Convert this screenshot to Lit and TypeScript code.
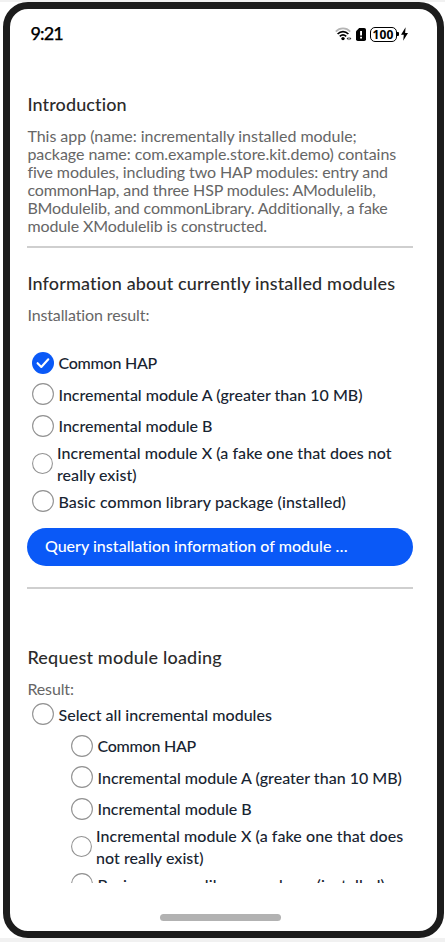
import { LitElement, html, css, svg } from "lit";
import { customElement, property } from "lit/decorators.js";
import { classMap } from "lit/directives/class-map.js";

interface Line {
  text: string;
  tracking: number;
}

interface Option {
  lines: Line[];
  checked?: boolean;
}

const line = (text: string, tracking = 0): Line => ({ text, tracking });

const intro: Line[] = [
  line("This app (name: incrementally installed module;", -0.03),
  line("package name: com.example.store.kit.demo) contains", -0.045),
  line("five modules, including two HAP modules: entry and", -0.11),
  line("commonHap, and three HSP modules: AModulelib,", -0.13),
  line("BModulelib, and commonLibrary. Additionally, a fake", -0.135),
  line("module XModulelib is constructed.", -0.12),
];

const installed: Option[] = [
  { lines: [line("Common HAP", -0.25)], checked: true },
  { lines: [line("Incremental module A (greater than 10 MB)", 0)] },
  { lines: [line("Incremental module B", -0.02)] },
  {
    lines: [
      line("Incremental module X (a fake one that does not", 0.045),
      line("really exist)", 0.05),
    ],
  },
  { lines: [line("Basic common library package (installed)", 0.11)] },
];

const loadable: Option[] = [
  { lines: [line("Common HAP", -0.25)] },
  { lines: [line("Incremental module A (greater than 10 MB)", 0.01)] },
  { lines: [line("Incremental module B", 0)] },
  {
    lines: [
      line("Incremental module X (a fake one that does", 0.06),
      line("not really exist)", 0.05),
    ],
  },
  { lines: [line("Basic common library package (installed)", 0.11)] },
];

const renderLine = (l: Line) =>
  html`<div style="letter-spacing:${l.tracking}px">${l.text}</div>`;

@customElement("check-row")
export class CheckRow extends LitElement {
  @property({ attribute: false }) option!: Option;

  static styles = css`
    :host {
      display: block;
    }
    .row {
      display: flex;
      align-items: center;
      height: 31.5px;
      gap: 4.5px;
      color: #182431;
      font-weight: 500;
      line-height: 22px;
      white-space: nowrap;
    }
    .tall {
      height: 44px;
      gap: 4px;
    }
    svg {
      flex: none;
      width: 22px;
      height: 22px;
    }
    .tall svg {
      width: 21px;
      height: 21px;
    }
    .text {
      padding-top: 1.2px;
    }
  `;

  render() {
    const { lines, checked } = this.option;
    return html`<div class=${classMap({ row: true, tall: lines.length > 1 })}>
      <svg viewBox="0 0 22 22" fill="none">
        ${checked
          ? svg`<circle cx="11" cy="11" r="11" fill="#0a59f7"/>
              <path d="M5.6 11.2l3.7 3.8 7-7.7" stroke="#fff" stroke-width="2.1" stroke-linecap="round" stroke-linejoin="round"/>`
          : svg`<circle cx="11" cy="11" r="10.4" stroke="#929292" stroke-width="1.1"/>`}
      </svg>
      <div class="text">${lines.map(renderLine)}</div>
    </div>`;
  }
}

@customElement("status-bar")
export class StatusBar extends LitElement {
  static styles = css`
    :host {
      display: flex;
      justify-content: space-between;
      align-items: center;
      height: 50px;
      padding: 0 29px 0 20.5px;
      color: #000;
    }
    .time {
      padding-bottom: 2px;
      font-size: 18px;
      font-weight: 500;
      line-height: 22px;
      letter-spacing: -0.9px;
      -webkit-text-stroke: 0.25px #000;
    }
    .icons {
      display: flex;
      align-items: center;
      gap: 4px;
    }
    svg {
      display: block;
    }
    .power {
      display: flex;
      align-items: center;
    }
    .battery {
      box-sizing: border-box;
      width: 27px;
      height: 15px;
      border: 1px solid #000;
      border-radius: 5px;
      font-family: "Noto Sans", sans-serif;
      font-size: 12px;
      font-weight: 700;
      line-height: 13px;
      text-align: center;
      letter-spacing: 0.1px;
    }
    .tip {
      width: 1.5px;
      height: 4px;
      margin: 0 2.5px 0 0.5px;
      background: #000;
      border-radius: 0 1px 1px 0;
    }
  `;

  render() {
    return html`
      <span class="time">9:21</span>
      <div class="icons">
        <svg width="17" height="14" viewBox="0 0 17 14" fill="none">
          <path d="M0.8 4.6C4.7 0.3 11.3 0.3 15.2 4.6" stroke="#b5b5b5" stroke-width="1.6" />
          <path d="M2.6 7C5.8 3.7 10.2 3.7 13.4 7" stroke="#000" stroke-width="1.7" />
          <path d="M4.8 9.4C6.7 7.5 9.3 7.5 11.2 9.4" stroke="#000" stroke-width="1.7" />
          <circle cx="8" cy="11.6" r="1.7" fill="#000" />
          <path d="M11.6 11.6l1.9-1.7v3.4zM16.4 11.6l-1.9-1.7v3.4z" fill="#333" />
        </svg>
        <svg width="10" height="13" viewBox="0 0 10 13">
          <path d="M3.2 0H8.2A1.8 1.8 0 0 1 10 1.8V11.2A1.8 1.8 0 0 1 8.2 13H1.8A1.8 1.8 0 0 1 0 11.2V3.2Z" fill="#000" />
          <path d="M4.1 3h1.9v4.6H4.1zM4.1 8.8h1.9v1.8H4.1z" fill="#fff" />
        </svg>
        <div class="power">
          <div class="battery">100</div>
          <div class="tip"></div>
          <svg width="7" height="14" viewBox="0 0 7 14">
            <path d="M4.6 0.3L0 7.8H2.8L2.2 13.7L7 5.9H4.1Z" fill="#000" />
          </svg>
        </div>
      </div>
    `;
  }
}

@customElement("app-root")
export class AppRoot extends LitElement {
  static styles = css`
    :host {
      display: block;
      box-sizing: border-box;
      height: 942px;
      padding: 2px 1px 4px 3px;
      background: linear-gradient(#f1f1f1 2px, #fff 2px, #fff 938px, #f1f1f1 938px);
      font-family: Lato, "Noto Sans", sans-serif;
      font-size: 16px;
      font-variant-ligatures: none;
    }
    .phone {
      display: flex;
      flex-direction: column;
      box-sizing: border-box;
      height: 936px;
      border: 7px solid #1c1c1c;
      border-radius: 25px;
      background: #fff;
      overflow: hidden;
    }
    .scroll {
      flex: none;
      box-sizing: border-box;
      height: 824px;
      padding: 33px 24px 0 17.4px;
      overflow: hidden;
    }
    h2 {
      margin: 0;
      color: #2b2b2b;
      font-size: 18px;
      font-weight: 500;
      line-height: 24px;
      white-space: nowrap;
    }
    .intro,
    .label {
      margin-top: 11px;
      color: #666;
      line-height: 18px;
      white-space: nowrap;
    }
    .rule {
      height: 2px;
      margin-top: 11px;
      background: #cfcfcf;
    }
    .installed-title {
      margin-top: 23px;
      letter-spacing: 0.16px;
    }
    .intro-title {
      letter-spacing: 0.12px;
    }
    .tight {
      letter-spacing: -0.12px;
    }
    .options {
      margin: 22.75px 0 0 4.6px;
    }
    .query {
      display: block;
      box-sizing: border-box;
      width: 100%;
      height: 38px;
      margin-top: 10.75px;
      padding: 0 17.5px 1.5px;
      border: 0;
      border-radius: 19px;
      background: #0a59f7;
      color: #fff;
      font: 500 16px Lato, "Noto Sans", sans-serif;
      font-variant-ligatures: none;
      letter-spacing: 0.02px;
      text-align: left;
    }
    .second-rule {
      margin-top: 21.5px;
    }
    .loading-title {
      margin-top: 55.5px;
      letter-spacing: 0.2px;
    }
    .select-all {
      margin: 0.75px 0 0 4.6px;
    }
    .nested {
      margin-left: 43.6px;
    }
    .home {
      width: 121px;
      height: 7px;
      margin: 30.5px auto 0 150px;
      border-radius: 4px;
      background: #b2b2b2;
    }
  `;

  render() {
    const rows = (options: Option[]) =>
      options.map((o) => html`<check-row .option=${o}></check-row>`);
    return html`
      <div class="phone">
        <status-bar></status-bar>
        <main class="scroll">
          <h2 class="intro-title">Introduction</h2>
          <div class="intro">${intro.map(renderLine)}</div>
          <div class="rule"></div>

          <h2 class="installed-title">Information about currently installed modules</h2>
          <div class="label tight">Installation result:</div>
          <div class="options">${rows(installed)}</div>
          <button class="query">Query installation information of module …</button>
          <div class="rule second-rule"></div>

          <h2 class="loading-title">Request module loading</h2>
          <div class="label tight">Result:</div>
          <div class="select-all">
            ${rows([{ lines: [line("Select all incremental modules", 0.02)] }])}
          </div>
          <div class="nested">${rows(loadable)}</div>
        </main>
        <div class="home"></div>
      </div>
    `;
  }
}
